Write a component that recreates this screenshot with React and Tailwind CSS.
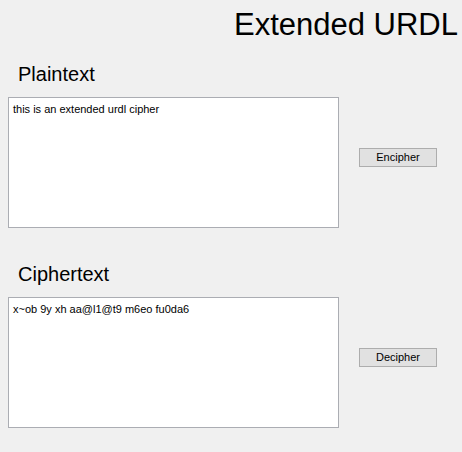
import React from "react";

function Section({ label, text, action }) {
  return (
    <div>
      <div className="ml-[18px] h-[35px] text-[20px] leading-[24px]">{label}</div>
      <div className="flex items-start">
        <div className="ml-[8px] w-[331px] h-[131px] border border-[#abadb3] bg-white px-[4px] pt-[4px] text-[11px] leading-[14px]">
          {text}
        </div>
        <button className="ml-[20px] mt-[51px] w-[78px] h-[19px] border border-[#adadad] bg-[#e1e1e1] text-[11px] leading-[17px] text-black">
          {action}
        </button>
      </div>
    </div>
  );
}

export default function App() {
  return (
    <div className="w-[462px] h-[452px] bg-[#f0f0f0] overflow-hidden text-black font-['Liberation_Sans',Arial,sans-serif]">
      <div className="flex justify-end pr-[4px] pt-[5px] h-[62px] text-[31px] leading-[40px]">
        Extended URDL
      </div>
      <div className="flex flex-col gap-[34px]">
        <Section label="Plaintext" text="this is an extended urdl cipher" action="Encipher" />
        <Section label="Ciphertext" text="x~ob 9y xh aa@l1@t9 m6eo fu0da6" action="Decipher" />
      </div>
    </div>
  );
}
